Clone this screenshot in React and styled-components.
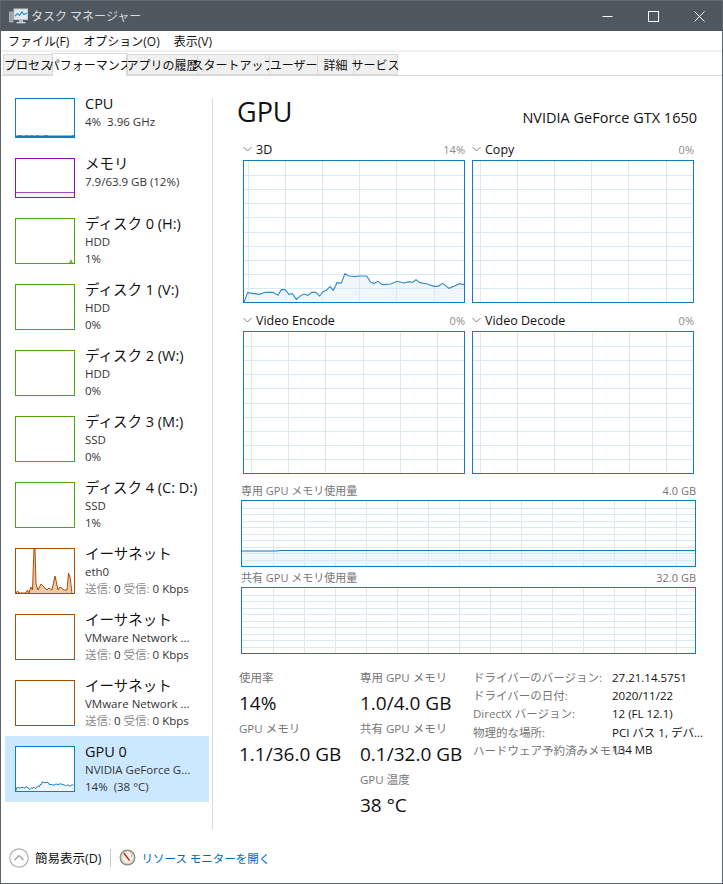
import React from "react";
import styled, { createGlobalStyle } from "styled-components";

const Global = createGlobalStyle`
  html, body { margin: 0; padding: 0; background: #fff; }
  body { font-family: "Open Sans", "Noto Sans CJK JP", sans-serif; color: #111; -webkit-font-smoothing: auto; }
  * { box-sizing: border-box; }
`;

const BLUE = "#117dbb";
const GRID = "#d9eaf4";
const FILL = "#f1f6fa";

const Window = styled.div`
  width: 723px; height: 884px; display: flex; flex-direction: column;
  border: 1px solid #5b6469; border-top-color: #646c71; background: #fff; overflow: hidden;
`;
const TitleBar = styled.div`
  height: 30px; flex: none; background: #4f585e; display: flex; align-items: center; padding-left: 8px;
`;
const TitleText = styled.span`
  font-size: 12px; color: #d9dcde; margin-left: 3px; flex: 1; white-space: pre;
`;
const WinButton = styled.div`
  width: 46px; height: 30px; display: flex; align-items: center; justify-content: center;
`;
const MenuBar = styled.div`
  height: 19px; flex: none; display: flex; align-items: center; padding-left: 7px; gap: 10px; font-size: 12px;
`;
const MenuItem = styled.span`color: #111; margin-right: ${(p) => p.$mr || 0}px;`;
const TabBar = styled.div`
  height: 26px; flex: none; border-top: 2px solid #f0f0f0; border-bottom: 1px solid #d9d9d9;
  display: flex; align-items: flex-end; padding-left: 2px;
`;
const Tab = styled.div`
  width: ${(p) => p.$w}px; height: ${(p) => (p.$active ? 23 : 21)}px;
  margin-bottom: ${(p) => (p.$active ? -1 : 0)}px;
  background: ${(p) => (p.$active ? "#fff" : "#f0f0f0")};
  border: 1px solid #d9d9d9; border-bottom: ${(p) => (p.$active ? "none" : "1px solid #d9d9d9")};
  border-right: ${(p) => (p.$last || p.$active ? "1px solid #d9d9d9" : "none")};
  font-size: 12px; display: flex; align-items: center; justify-content: center; white-space: nowrap; color: #111;
`;
const Body = styled.div`flex: 1; display: flex; min-height: 0;`;
const Sidebar = styled.div`
  width: 211px; flex: none; padding: 12px 3px 0 4px; display: flex; flex-direction: column;
`;
const Row = styled.div`
  display: flex; gap: 10px; padding: 10px; height: ${(p) => (p.$short ? 60 : 66)}px;
  background: ${(p) => (p.$selected ? "#cce8ff" : "transparent")};
`;
const Thumb = styled.div`
  width: 60px; height: ${(p) => (p.$short ? 40 : 46)}px; flex: none;
  border: 1px solid ${(p) => p.$color}; background: #fff; overflow: hidden;
`;
const ThumbSvg = styled.svg`display: block; width: 100%; height: 100%;`;
const RowText = styled.div`display: flex; flex-direction: column; margin-top: -4px; min-width: 0; white-space: nowrap;`;
const RowTitle = styled.div`font-size: 14.5px; line-height: 20px; color: #111;`;
const RowSub = styled.div`font-size: 11.5px; line-height: 16.5px; color: #333;`;
const Muted = styled.span`color: #8c8c8c;`;
const Divider = styled.div`width: 1px; flex: none; margin-top: 22px; background: #d9d9d9;`;
const Main = styled.div`flex: 1; min-width: 0; display: flex; flex-direction: column; padding: 16px 0 0 24px;`;
const Header = styled.div`
  width: 460px; display: flex; justify-content: space-between; align-items: flex-end; height: 40px;
`;
const BigTitle = styled.div`font-size: 27px; line-height: 40px; color: #111; margin-top: -4px;`;
const DeviceName = styled.div`font-size: 14.5px; line-height: 20px; color: #111; margin-bottom: 4px;`;
const ChartGrid = styled.div`
  display: grid; grid-template-columns: 222px 222px; column-gap: 7px; row-gap: 6px; margin: 6px 0 0 6px;
`;
const ChartLabelRow = styled.div`
  height: 22px; display: flex; align-items: center; justify-content: space-between; width: ${(p) => p.$w || 222}px;
`;
const ChartLabel = styled.div`display: flex; align-items: center; gap: 4px; font-size: 12.5px; color: #111;`;
const ChartPct = styled.div`font-size: 11px; color: #8c8c8c;`;
const Frame = styled.div`
  width: ${(p) => p.$w}px; height: ${(p) => p.$h}px; border: 1px solid ${BLUE}; overflow: hidden;
`;
const ChartSvg = styled.svg`display: block;`;
const Wide = styled.div`margin: 6px 0 0 4px; display: flex; flex-direction: column;`;
const WideLabelRow = styled.div`
  width: 455px; height: 20px; display: flex; align-items: center; justify-content: space-between;
  font-size: 11px; color: #767676;
`;
const Stats = styled.div`display: flex; margin: 14px 0 0 2px;`;
const StatCol = styled.div`width: ${(p) => p.$w}px; flex: none; display: flex; flex-direction: column;`;
const StatLabel = styled.div`font-size: 11.5px; line-height: 20px; color: #767676; white-space: nowrap;`;
const StatValue = styled.div`font-size: 19px; line-height: 31px; color: #111; white-space: nowrap;`;
const InfoTable = styled.div`
  display: grid; grid-template-columns: 139px auto; grid-auto-rows: 18.2px; align-items: center; font-size: 11.5px;
`;
const InfoKey = styled.div`color: #767676; white-space: nowrap;`;
const InfoVal = styled.div`color: #111; white-space: nowrap;`;
const Footer = styled.div`
  height: 53px; flex: none; display: flex; align-items: center; padding: 2px 0 0 8px;
`;
const FooterText = styled.span`font-size: 12.5px; color: #111; margin-left: 6px;`;
const FooterSep = styled.div`width: 1px; height: 18px; background: #c8c8c8; margin: 0 8px 0 9px;`;
const FooterLink = styled.span`font-size: 11.5px; color: #0066cc; margin-left: 5px; white-space: pre;`;

const PTS = [[25,208],[36,179],[50,181],[70,184],[90,178],[112,178],[127,187],[137,170],[148,170],[160,184],[170,182],[182,199],[195,188],[205,183],[217,187],[228,178],[240,178],[252,189],[262,176],[272,172],[283,161],[293,172],[304,149],[317,150],[328,122],[338,128],[355,131],[372,129],[393,129],[405,148],[416,151],[427,145],[440,155],[465,153],[485,145],[505,150],[520,146],[530,148],[541,140],[552,149],[575,153],[595,160],[607,160],[621,151],[640,166],[655,160],[672,152],[685,155]]
  .map(([x, y]) => [(x - 25) / 3, (y + 690 - 474) / 3]);
const LINE3D = PTS.map((p) => p.join(",")).join(" ");
const AREA3D = `0,143 ${LINE3D} 222,143`;

function Grid({ w, h, xStep, xOff, rows }) {
  const xs = [];
  for (let x = xOff; x < w; x += xStep) xs.push(Math.round(x) + 0.5);
  const ys = [];
  for (let i = 1; i < rows; i++) ys.push(Math.round((i * h) / rows) + 0.5);
  return (
    <g stroke={GRID} strokeWidth="1">
      {xs.map((x) => <line key={x} x1={x} x2={x} y1="0" y2={h} />)}
      {ys.map((y) => <line key={y} x1="0" x2={w} y1={y} y2={y} />)}
    </g>
  );
}

function Chart({ w = 222, h = 143, xStep = 37.2, xOff, rows = 10, children }) {
  return (
    <Frame $w={w} $h={h}>
      <ChartSvg width={w - 2} height={h - 2} viewBox={`0 0 ${w - 2} ${h - 2}`}>
        {children && children[0]}
        <Grid w={w} h={h - 2} xStep={xStep} xOff={xOff} rows={rows} />
        {children && children[1]}
      </ChartSvg>
    </Frame>
  );
}

const Chevron = () => (
  <svg width="9" height="6" viewBox="0 0 9 6"><path d="M0.5 1 L4.5 5 L8.5 1" fill="none" stroke="#808080" strokeWidth="1" /></svg>
);

function ChartCell({ label, pct, xOff, children }) {
  return (
    <div>
      <ChartLabelRow>
        <ChartLabel><Chevron />{label}</ChartLabel>
        <ChartPct>{pct}</ChartPct>
      </ChartLabelRow>
      <Chart xOff={xOff}>{children}</Chart>
    </div>
  );
}

const ETH = [[0,44],[1.5,42],[3,44],[10,44],[11.5,41],[13,44],[15,38],[16.5,41],[18,0],[19,0],[20,35],[22,41],[25,35],[28,38],[31,41],[33,39],[36,41],[39,27],[42,41],[44,38],[48,41],[51,41],[52.5,24],[54,28],[56,44]];
const CPU_SPIKES = [2,3,4,5,9,10,11,14,15,16,20,21,22,28,29,30,31,56,57];

function ThumbDraw({ kind, color }) {
  if (kind === "cpu")
    return (
      <ThumbSvg viewBox="0 0 58 38">
        <rect x="0" y="36.5" width="58" height="1.5" fill={color} />
        {CPU_SPIKES.map((x) => <rect key={x} x={x} y={36} width="1" height="1" fill={color} opacity="0.6" />)}
      </ThumbSvg>
    );
  if (kind === "mem")
    return (
      <ThumbSvg viewBox="0 0 58 38">
        <rect x="0" y="33" width="58" height="5" fill="#f4f2f4" />
        <line x1="0" x2="58" y1="33.5" y2="33.5" stroke={color} strokeWidth="1" opacity="0.75" />
      </ThumbSvg>
    );
  if (kind === "disk")
    return (
      <ThumbSvg viewBox="0 0 58 44">
        <polygon points="53,44 55,40 57,44" fill={color} opacity="0.8" />
      </ThumbSvg>
    );
  if (kind === "eth")
    return (
      <ThumbSvg viewBox="0 0 58 44">
        <polygon points={ETH.map((p) => p.join(",")).join(" ")} fill="#ecc9a8" />
        <polyline points={ETH.map((p) => p.join(",")).join(" ")} fill="none" stroke={color} strokeWidth="1" />
      </ThumbSvg>
    );
  if (kind === "gpu")
    return (
      <ThumbSvg viewBox="0 0 222 143" preserveAspectRatio="none">
        <polygon points={AREA3D} fill={FILL} />
        <polyline points={LINE3D} fill="none" stroke={color} strokeWidth="1" vectorEffect="non-scaling-stroke" />
      </ThumbSvg>
    );
  return null;
}

const SendRecv = () => (
  <RowSub><Muted>送信:</Muted> 0 <Muted>受信:</Muted> 0 Kbps</RowSub>
);

const ROWS = [
  { title: "CPU", lines: ["4%  3.96 GHz"], color: BLUE, kind: "cpu", short: true },
  { title: "メモリ", lines: ["7.9/63.9 GB (12%)"], color: "#8b12ae", kind: "mem", short: true },
  { title: "ディスク 0 (H:)", lines: ["HDD", "1%"], color: "#4da60c", kind: "disk" },
  { title: "ディスク 1 (V:)", lines: ["HDD", "0%"], color: "#4da60c" },
  { title: "ディスク 2 (W:)", lines: ["HDD", "0%"], color: "#4da60c" },
  { title: "ディスク 3 (M:)", lines: ["SSD", "0%"], color: "#4da60c" },
  { title: "ディスク 4 (C: D:)", lines: ["SSD", "1%"], color: "#4da60c" },
  { title: "イーサネット", lines: ["eth0"], net: true, color: "#a74f01", kind: "eth" },
  { title: "イーサネット", lines: ["VMware Network ..."], net: true, color: "#a74f01" },
  { title: "イーサネット", lines: ["VMware Network ..."], net: true, color: "#a74f01" },
  { title: "GPU 0", lines: ["NVIDIA GeForce G...", "14%  (38 °C)"], color: BLUE, kind: "gpu", selected: true },
];

const TABS = [["プロセス", 49], ["パフォーマンス", 75, true], ["アプリの履歴", 70], ["スタートアップ", 72], ["ユーザー", 48], ["詳細", 36], ["サービス", 45]];

const INFO = [
  ["ドライバーのバージョン:", "27.21.14.5751"],
  ["ドライバーの日付:", "2020/11/22"],
  ["DirectX バージョン:", "12 (FL 12.1)"],
  ["物理的な場所:", "PCI バス 1, デバ..."],
  ["ハードウェア予約済みメモリ:", "134 MB"],
];

const AppIcon = () => (
  <svg width="19" height="17" viewBox="0 0 19 17">
    <rect x="0.5" y="4" width="3.5" height="10" fill="#9aa0a3" stroke="#c9cdcf" strokeWidth="0.6" />
    <rect x="5" y="1" width="13.5" height="10.5" fill="#dfeaf1" stroke="#c9cdcf" />
    <polyline points="6,8 8.5,5.5 10.5,7.5 13,3.8 15,6.5 18,5" fill="none" stroke="#2f8fd0" strokeWidth="1.1" />
    <rect x="10" y="11.5" width="4" height="2.5" fill="#b5babc" />
    <rect x="7.5" y="14" width="9" height="1.3" fill="#d6d9da" />
  </svg>
);

const ResourceIcon = () => (
  <svg width="17" height="17" viewBox="0 0 17 17">
    <circle cx="8.5" cy="8.5" r="8" fill="#8f8b80" />
    <circle cx="8.5" cy="8.5" r="6.7" fill="#d8d6cc" />
    <circle cx="8.5" cy="8.5" r="5.3" fill="#f6f3e6" />
    <line x1="5" y1="4.2" x2="10.6" y2="11.6" stroke="#c4201c" strokeWidth="1.5" />
    <line x1="12.5" y1="5" x2="12.5" y2="8" stroke="#a8a69c" strokeWidth="0.8" />
  </svg>
);

export default function App() {
  return (
    <>
      <Global />
      <Window>
        <TitleBar>
          <AppIcon />
          <TitleText>タスク マネージャー</TitleText>
          <WinButton><svg width="11" height="11" viewBox="0 0 11 11"><line x1="0.5" x2="10.5" y1="5.5" y2="5.5" stroke="#fff" /></svg></WinButton>
          <WinButton><svg width="11" height="11" viewBox="0 0 11 11"><rect x="0.5" y="0.5" width="10" height="10" fill="none" stroke="#fff" /></svg></WinButton>
          <WinButton><svg width="11" height="11" viewBox="0 0 11 11"><path d="M0.5 0.5 L10.5 10.5 M10.5 0.5 L0.5 10.5" stroke="#fff" fill="none" /></svg></WinButton>
        </TitleBar>
        <MenuBar>
          <MenuItem $mr={4}>ファイル(F)</MenuItem>
          <MenuItem $mr={4}>オプション(O)</MenuItem>
          <MenuItem>表示(V)</MenuItem>
        </MenuBar>
        <TabBar>
          {TABS.map(([t, w, a], i) => (
            <Tab key={t} $w={w} $active={a} $last={i === TABS.length - 1}>{t}</Tab>
          ))}
        </TabBar>
        <Body>
          <Sidebar>
            {ROWS.map((r, i) => (
              <Row key={i} $short={r.short} $selected={r.selected}>
                <Thumb $color={r.color} $short={r.short}><ThumbDraw kind={r.kind} color={r.color} /></Thumb>
                <RowText>
                  <RowTitle>{r.title}</RowTitle>
                  {r.lines.map((l, j) => <RowSub key={j} style={{ whiteSpace: "pre" }}>{l}</RowSub>)}
                  {r.net && <SendRecv />}
                </RowText>
              </Row>
            ))}
          </Sidebar>
          <Divider />
          <Main>
            <Header>
              <BigTitle>GPU</BigTitle>
              <DeviceName>NVIDIA GeForce GTX 1650</DeviceName>
            </Header>
            <ChartGrid>
              <ChartCell label="3D" pct="14%" xOff={3.5}>
                {[<polygon key="a" points={AREA3D} fill={FILL} />, <polyline key="b" points={LINE3D} fill="none" stroke="#2f8cc7" strokeWidth="1.1" />]}
              </ChartCell>
              <ChartCell label="Copy" pct="0%" xOff={6.5} />
              <ChartCell label="Video Encode" pct="0%" xOff={7} />
              <ChartCell label="Video Decode" pct="0%" xOff={7} />
            </ChartGrid>
            <Wide>
              <WideLabelRow><span>専用 GPU メモリ使用量</span><span>4.0 GB</span></WideLabelRow>
              <Chart w={455} h={67} xStep={31} xOff={30.5}>
                {[
                  <polygon key="a" points="0,50 35,50 38,49.5 453,49.5 453,66 0,66" fill={FILL} />,
                  <polyline key="b" points="0,50 35,50 38,49.5 453,49.5" fill="none" stroke={BLUE} strokeWidth="1" />,
                ]}
              </Chart>
              <WideLabelRow><span>共有 GPU メモリ使用量</span><span>32.0 GB</span></WideLabelRow>
              <Chart w={455} h={67} xStep={31} xOff={30.5} />
            </Wide>
            <Stats>
              <StatCol $w={121}>
                <StatLabel>使用率</StatLabel><StatValue>14%</StatValue>
                <StatLabel>GPU メモリ</StatLabel><StatValue>1.1/36.0 GB</StatValue>
              </StatCol>
              <StatCol $w={113}>
                <StatLabel>専用 GPU メモリ</StatLabel><StatValue>1.0/4.0 GB</StatValue>
                <StatLabel>共有 GPU メモリ</StatLabel><StatValue>0.1/32.0 GB</StatValue>
                <StatLabel>GPU 温度</StatLabel><StatValue>38 °C</StatValue>
              </StatCol>
              <InfoTable>
                {INFO.map(([k, v]) => (
                  <React.Fragment key={k}><InfoKey>{k}</InfoKey><InfoVal>{v}</InfoVal></React.Fragment>
                ))}
              </InfoTable>
            </Stats>
          </Main>
        </Body>
        <Footer>
          <svg width="20" height="20" viewBox="0 0 20 20">
            <circle cx="10" cy="10" r="9.2" fill="#fff" stroke="#b0b0b0" strokeWidth="1.2" />
            <path d="M5.5 12 L10 7.5 L14.5 12" fill="none" stroke="#9a9a9a" strokeWidth="1.2" />
          </svg>
          <FooterText>簡易表示(D)</FooterText>
          <FooterSep />
          <ResourceIcon />
          <FooterLink>リソース モニターを開く</FooterLink>
        </Footer>
      </Window>
    </>
  );
}
